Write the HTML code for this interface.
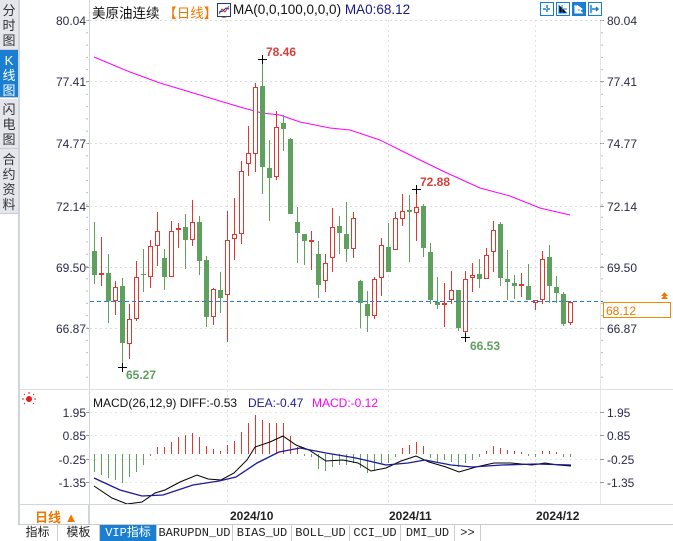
<!DOCTYPE html>
<html><head><meta charset="utf-8">
<style>
*{margin:0;padding:0;box-sizing:border-box}
body{width:673px;height:541px;overflow:hidden;background:#fff;font-family:"Liberation Sans","Noto Sans CJK SC",sans-serif;position:relative}
.tab{position:absolute;left:0;width:18px;background:#e4e6ec;color:#333;font-size:13px;line-height:15px;text-align:center;padding-top:3px;border-bottom:1px solid #c8ccd4}
.tab.on{background:#1a7fd0;color:#fff}
.abs{position:absolute;white-space:nowrap}
.bt{position:absolute;top:525px;height:16px;font-size:12px;line-height:16px;text-align:center;border-right:1px solid #c8ccd4;color:#222;font-family:"Liberation Mono","Noto Sans CJK SC",monospace}
</style></head><body>
<div class="tab" style="top:0;height:50px">分时图</div>
<div class="tab on" style="top:50px;height:48px">K线图</div>
<div class="tab" style="top:99px;height:50px">闪电图</div>
<div class="tab" style="top:149px;height:65px">合约资料</div>
<div style="position:absolute;left:18px;top:0;width:2px;height:525px;background:#d0d4dc"></div>

<div class="abs" style="left:92px;top:2px;font-size:13.5px;color:#111">美原油连续 <span style="color:#f07800">【日线】</span><span style="color:#f07800">⊕</span></div>
<svg class="abs" style="left:217px;top:3px" width="14" height="14"><rect x="0.5" y="0.5" width="13" height="13" fill="#fff" stroke="#1a3a9a"/><path d="M2 11 L5 6 L8 9 L12 3" stroke="#d03030" fill="none"/><path d="M2 9 L6 8 L9 5 L12 6" stroke="#1a3a9a" fill="none"/></svg>
<div class="abs" style="left:233px;top:2px;font-size:13.5px;color:#111">MA(0,0,100,0,0,0) <span style="color:#1a1a8a">MA0:68.12</span></div>

<svg class="abs" style="left:540px;top:2px" width="62" height="16">
<g stroke="#1a7fd0" fill="none"><rect x="0.5" y="0.5" width="13" height="13"/><rect x="16.5" y="0.5" width="13" height="13"/><rect x="32.5" y="0.5" width="13" height="13" fill="#1a7fd0"/><rect x="48.5" y="0.5" width="13" height="13"/></g>
<path d="M7 3v8M3 7h8" stroke="#1a7fd0" stroke-width="1.5" stroke-dasharray="3 1"/>
<path d="M19 3v8h8M22 3v8M23 7h4" stroke="#1a7fd0"/>
<path d="M35 3v8h8M37 3v7M38 4l4 3-4 3z" stroke="#fff" fill="#fff"/>
<path d="M51 3v8M52 7h6M56 5l2 2-2 2" stroke="#1a7fd0" stroke-width="1.5" fill="none"/>
</svg>

<svg class="abs" style="left:0;top:0" width="673" height="541" id="ch"></svg>

<div class="abs" style="left:35px;top:507px;font-size:13px;color:#f07800;font-weight:bold">日线 ▲</div>
<div style="position:absolute;left:18px;top:504px;width:71px;height:21px;border:1px solid #d0d4dc"></div>
<div style="position:absolute;left:18px;top:524px;width:655px;height:1px;background:#c8ccd4"></div>
<div class="bt" style="left:18px;width:40px">指标</div>
<div class="bt" style="left:58px;width:42px">模板</div>
<div class="bt" style="left:100px;width:57px;background:#1a7fd0;color:#fff">VIP指标</div>
<div class="bt" style="left:157px;width:76px">BARUPDN_UD</div>
<div class="bt" style="left:233px;width:59px">BIAS_UD</div>
<div class="bt" style="left:292px;width:58px">BOLL_UD</div>
<div class="bt" style="left:350px;width:51px">CCI_UD</div>
<div class="bt" style="left:401px;width:54px">DMI_UD</div>
<div class="bt" style="left:455px;width:26px">&gt;&gt;</div>

<script>
var s='';var R='#e0382e',G='#5ea05e';
function ln(x1,y1,x2,y2,c,e){s+='<line x1="'+x1+'" y1="'+y1+'" x2="'+x2+'" y2="'+y2+'" stroke="'+c+'" '+(e||'')+'/>';}
function tx(x,y,t,c,e){s+='<text x="'+x+'" y="'+y+'" fill="'+c+'" font-size="12" font-family="Liberation Sans,sans-serif" '+(e||'')+'>'+t+'</text>';}
[20,81,143,206,267,328].forEach(function(y){ln(90,y+.5,600,y+.5,'#dcdcdc','stroke-dasharray="2 3"');});
[227,388,535].forEach(function(x){ln(x+.5,20,x+.5,505,'#e2e2e2','stroke-dasharray="2 3"');});
ln(89.5,0,89.5,524,'#d0d4dc');
ln(600.5,20,600.5,505,'#e6e6e6');
var lv=[['80.04',20],['77.41',81],['74.77',143],['72.14',206],['69.50',267],['66.87',328]];
lv.forEach(function(a){tx(86,a[1]+5,a[0],'#2a2a4a','text-anchor="end" font-size="12.5"');tx(607,a[1]+5,a[0],'#2a2a4a','font-size="12.5"');ln(86,a[1]+.5,89,a[1]+.5,'#999');ln(600,a[1]+.5,604,a[1]+.5,'#999');});
for(var y=20;y<380;y+=12.3){ln(86,y+.5,88,y+.5,'#bbb');ln(601,y+.5,603,y+.5,'#bbb');}
s+='<polyline fill="none" stroke="#ff00ff" stroke-width="1" points="94,57 130,72 160,83 200,95 240,107 262,113 280,115 300,122 330,128 350,130 380,140 400,150 420,160 447,173 480,188 510,196 540,208 570,215"/>';
var C=[[94,251,275,222,284,1],[101,273,275,237,286,0],[108,273,301,254,323,1],[115,287,301,281,315,0],[122,286,343,278,367,1],[129,319,344,304,359,0],[136,277,319,261,321,0],[143,274,275,249,292,1],[150,246,277,240,288,0],[157,231,246,212,266,0],[164,258,277,249,290,1],[171,231,277,221,277,0],[178,228,230,223,248,0],[185,227,240,214,269,1],[192,222,240,200,246,0],[199,222,261,216,275,1],[206,260,317,256,327,1],[213,289,317,288,325,0],[220,290,298,272,313,1],[227,240,295,211,342,0],[234,234,239,198,260,0],[241,171,234,161,244,0],[248,153,164,126,176,0],[255,87,154,83,172,0],[262,86,167,59,194,1],[269,168,178,140,221,1],[276,127,177,111,180,0],[283,123,129,115,151,1],[290,139,214,138,214,1],[297,222,233,207,263,1],[304,234,241,234,265,1],[311,240,242,231,270,0],[318,254,285,241,298,1],[325,263,281,254,292,0],[332,227,258,208,272,0],[339,226,233,216,254,1],[346,234,249,202,262,1],[353,218,249,212,258,0],[360,281,303,280,328,1],[367,304,316,291,332,1],[374,279,316,277,319,0],[381,245,278,238,296,0],[388,247,272,223,272,1],[395,218,250,212,250,0],[402,211,219,194,226,0],[409,210,212,195,262,1],[416,207,213,189,241,0],[423,206,248,204,257,1],[430,252,300,243,304,1],[437,302,305,277,309,1],[444,303,305,283,327,0],[451,290,300,271,304,0],[458,290,328,290,331,1],[465,279,332,271,337,0],[472,275,278,263,292,0],[479,274,279,259,288,1],[486,255,279,248,279,0],[493,230,252,221,272,0],[500,224,278,222,286,1],[507,279,282,250,300,1],[514,283,286,275,299,1],[521,284,286,273,297,0],[528,286,300,264,300,1],[535,300,303,300,310,0],[542,259,300,251,304,0],[549,257,286,245,303,1],[556,287,293,276,303,1],[563,294,324,292,326,1],[570,302,323,301,325,0]];
C.forEach(function(c){var x=c[0],t=Math.min(c[1],c[2]),b=Math.max(c[1],c[2]),h=Math.max(b-t,1);
 if(c[5]){ln(x+.5,c[3],x+.5,c[4],G);s+='<rect x="'+(x-2)+'" y="'+t+'" width="5" height="'+h+'" fill="'+G+'"/>';}
 else{ln(x+.5,c[3],x+.5,t,R);ln(x+.5,b,x+.5,c[4],R);if(h<3)s+='<rect x="'+(x-2)+'" y="'+t+'" width="5" height="2" fill="'+R+'"/>';else s+='<rect x="'+(x-1.5)+'" y="'+(t+.5)+'" width="4" height="'+(h-1)+'" fill="#fff" stroke="'+R+'"/>';}
});
function cross(x,y){ln(x-4,y+.5,x+5,y+.5,'#000');ln(x+.5,y-4,x+.5,y+5,'#000');}
cross(262,59);tx(266,56,'78.46','#d9403a','font-weight="bold" font-size="13"');
cross(122,367);tx(126,379,'65.27','#5ea05e','font-weight="bold" font-size="13"');
cross(416,189);tx(420,186,'72.88','#d9403a','font-weight="bold" font-size="13"');
cross(465,337);tx(470,350,'66.53','#5ea05e','font-weight="bold" font-size="13"');
ln(90,301.5,603,301.5,'#2a78d8','stroke-dasharray="4 3"');
s+='<rect x="603.5" y="302.5" width="67" height="15" fill="#fff" stroke="#f08a00"/>';
tx(606,315,'68.12','#f07800','font-size="13"');
s+='<path d="M661 299h7l-3.5-4z M661 296h7l-3.5-4z" fill="#f07800"/>';
ln(20,389.5,673,389.5,'#e0e0e0');
s+='<circle cx="29" cy="399" r="3" fill="#e02020"/><g stroke="#e02020"><line x1="24" y1="399" x2="22" y2="399"/><line x1="34" y1="399" x2="36" y2="399"/><line x1="29" y1="394" x2="29" y2="392"/><line x1="25" y1="395" x2="24" y2="394"/><line x1="33" y1="395" x2="34" y2="394"/><line x1="25" y1="403" x2="24" y2="404"/><line x1="33" y1="403" x2="34" y2="404"/></g>';
tx(93,407,'MACD(26,12,9) DIFF:-0.53','#111','font-size="12.5"');
tx(248,407,'DEA:-0.47','#1a1a9a','font-size="12.5"');
tx(312,407,'MACD:-0.12','#ff00ff','font-size="12.5"');
[['1.95',412],['0.85',435],['-0.25',459],['-1.35',482]].forEach(function(a){tx(86,a[1]+5,a[0],'#2a2a4a','text-anchor="end" font-size="12.5"');tx(607,a[1]+5,a[0],'#2a2a4a','font-size="12.5"');ln(86,a[1]+.5,89,a[1]+.5,'#999');ln(600,a[1]+.5,604,a[1]+.5,'#999');});
[412,435,459,482].forEach(function(y){ln(90,y+.5,600,y+.5,'#e6e6e6','stroke-dasharray="2 3"');});
var H=[-18,-21,-24,-26,-29,-23,-18,-11,-2,7,7,12,17,19,21,17,8,5,3,9,13,22,31,39,34,31,31,31,18,7,-2,-3,-15,-17,-13,-11,-11,-9,-14,-19,-16,-9,-9,-3,6,9,12,8,-4,-8,-6,-8,-13,-9,-6,-3,3,8,6,4,3,2,-2,-3,3,3,2,-3,-3];
var z=454;
H.forEach(function(v,i){var x=94+i*7+.5;if(v>0)ln(x,z-v,x,z,R);else ln(x,z,x,z-v,G);});
s+='<polyline fill="none" stroke="#000" points="94,486 112,498 127,504 142,502 155,493 165,490 180,482 197,475 208,479 221,480 234,473 247,460 255,447 270,442 283,436 296,445 309,450 326,461 343,460 358,463 371,471 386,468 401,461 416,456 429,462 446,467 459,472 476,467 494,463 511,463 532,465 545,463 558,465 571,466"/>';
s+='<polyline fill="none" stroke="#1a1a9a" stroke-width="1.3" points="94,478 120,490 142,496 163,495 193,485 219,481 236,477 257,463 279,452 300,448 326,453 356,458 386,465 408,463 425,460 451,465 472,467 502,465 536,464 571,465"/>';
ln(90,504.5,673,504.5,'#d0d4dc');
tx(230,520,'2024/10','#222','font-weight="bold"');
tx(389,520,'2024/11','#222','font-weight="bold"');
tx(536,520,'2024/12','#222','font-weight="bold"');
document.getElementById('ch').innerHTML=s;
</script>
</body></html>
